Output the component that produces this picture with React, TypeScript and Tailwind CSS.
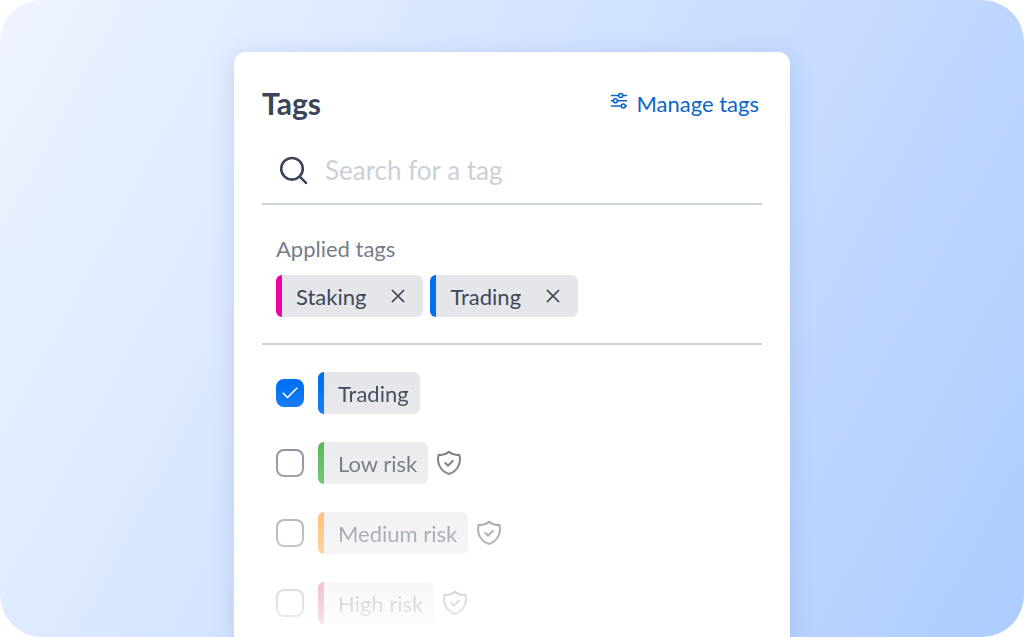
import React, { useState } from "react";

function Sliders() {
  return (
    <svg viewBox="0 0 18 18" className="size-[18px] -translate-y-0.5" fill="none" stroke="currentColor" strokeWidth="1.6" strokeLinecap="round" aria-hidden="true">
      <path d="M1.5 3.5h7M13 3.5h3.5M1.5 8.8h1.8M7.6 8.8h8.9M1.5 14h9.7M15.6 14h.9" />
      <circle cx="10.7" cy="3.5" r="2" />
      <circle cx="5.4" cy="8.8" r="2" />
      <circle cx="13.3" cy="14" r="2" />
    </svg>
  );
}

function Shield() {
  return (
    <svg viewBox="0 0 26 26" className="size-[26px] text-[#4b5563]" fill="none" stroke="currentColor" strokeWidth="2" strokeLinecap="round" strokeLinejoin="round" aria-hidden="true">
      <path d="M13 1.800C15.900 4.300 19.500 5.300 23.300 4.700C25.400 12 22.500 20.800 13 24C3.500 20.800 .6 12 2.700 4.700C6.500 5.300 10.100 4.300 13 1.800z" />
      <path d="M9.300 13l2.700 2.700 4.800-5" />
    </svg>
  );
}

const bars = {
  pink: "bg-[#f000a8]",
  blue: "bg-[#0070f3]",
  green: "bg-[#26a826]",
  orange: "bg-[#ff8a00]",
  red: "bg-[#cc1a45]",
};

type Color = keyof typeof bars;

function Tag({ label, color, onRemove }: { label: string; color: Color; onRemove?: () => void }) {
  return (
    <span className="flex h-[42px] overflow-hidden rounded-md bg-[#e5e6ea] text-[22px] leading-[28px] text-[#3f4859]">
      <span className={`w-[6px] shrink-0 ${bars[color]}`} />
      <span className="pt-2 pr-[11px] pl-3.5 whitespace-nowrap">{label}</span>
      {onRemove && (
        <button type="button" aria-label={`Remove ${label}`} onClick={onRemove} className="mr-1 flex w-[42px] items-center justify-center">
          <svg viewBox="0 0 14 14" className="size-3.5" fill="none" stroke="currentColor" strokeWidth="1.6" strokeLinecap="round" aria-hidden="true">
            <path d="M1.400 1.400l11.200 11.200M12.600 1.400L1.400 12.600" />
          </svg>
        </button>
      )}
    </span>
  );
}

const options: { label: string; color: Color; verified: boolean }[] = [
  { label: "Trading", color: "blue", verified: false },
  { label: "Low risk", color: "green", verified: true },
  { label: "Medium risk", color: "orange", verified: true },
  { label: "High risk", color: "red", verified: true },
];

export default function App() {
  const [applied, setApplied] = useState<{ label: string; color: Color }[]>([
    { label: "Staking", color: "pink" },
    { label: "Trading", color: "blue" },
  ]);
  const [checked, setChecked] = useState<string[]>(["Trading"]);

  return (
    <main className="h-screen overflow-hidden rounded-[42px] bg-[linear-gradient(118deg,#eff4ff_0%,#dfebff_24%,#aeccff_100%)] px-4 pt-[52px] font-['Lato',sans-serif]">
      <section className="mx-auto w-full max-w-[556px] rounded-t-xl bg-white px-7 pt-[31px] shadow-[0_4px_24px_rgba(60,90,160,0.18)]">
        <header className="flex h-10 items-center justify-between pr-[3px]">
          <h1 className="text-[30px] font-bold text-[#3a4559]">Tags</h1>
          <a href="#manage" className="flex items-center gap-2 text-[22px] text-[#0d66c8]">
            <Sliders />
            Manage tags
          </a>
        </header>

        <label className="mt-[13px] flex h-[69px] items-center gap-[17px] border-b-2 border-[#cdd2d7] pl-4">
          <svg viewBox="0 0 30 30" className="size-[30px] shrink-0 text-[#3a4559]" fill="none" stroke="currentColor" strokeWidth="2.600" strokeLinecap="round" aria-hidden="true">
            <circle cx="14" cy="13.800" r="10.800" />
            <path d="M22 21.800l6 6" />
          </svg>
          <input type="text" aria-label="Search for a tag" placeholder="Search for a tag" className="min-w-0 flex-1 text-[26px] leading-8 text-[#3a4559] outline-none placeholder:text-[#cbd0d8]" />
        </label>

        <div className="border-b-2 border-[#cdd2d7] px-3.5 pt-[27px] pb-[26px]">
          <h2 className="h-[43px] text-[22px] leading-[34px] text-[#757d8b]">Applied tags</h2>
          <div className="flex flex-wrap gap-[7px]">
            {applied.map((t) => (
              <Tag key={t.label} {...t} onRemove={() => setApplied(applied.filter((a) => a.label !== t.label))} />
            ))}
          </div>
        </div>

        <ul className="flex flex-col gap-7 px-3.5 pt-[27px] pb-4 [mask-image:linear-gradient(to_bottom,black_13%,transparent_106%)]">
          {options.map((o) => (
            <li key={o.label} className="flex items-center gap-2">
              <label className="flex items-center gap-3.5">
                <span className="grid size-7 place-items-center">
                  <input
                    type="checkbox"
                    checked={checked.includes(o.label)}
                    onChange={() => setChecked(checked.includes(o.label) ? checked.filter((c) => c !== o.label) : [...checked, o.label])}
                    className="peer col-start-1 row-start-1 size-7 appearance-none rounded-lg border-2 border-[#6b7280] bg-white checked:border-[#0070f3] checked:bg-[#0070f3]"
                  />
                  <svg viewBox="0 0 16 12" className="pointer-events-none invisible col-start-1 row-start-1 h-3 w-4 text-white peer-checked:visible" fill="none" stroke="currentColor" strokeWidth="1.600" strokeLinecap="round" strokeLinejoin="round" aria-hidden="true">
                    <path d="M1.200 6.200l4.300 4.300L14.800 1.200" />
                  </svg>
                </span>
                <Tag label={o.label} color={o.color} />
              </label>
              {o.verified && <Shield />}
            </li>
          ))}
        </ul>
      </section>
    </main>
  );
}
